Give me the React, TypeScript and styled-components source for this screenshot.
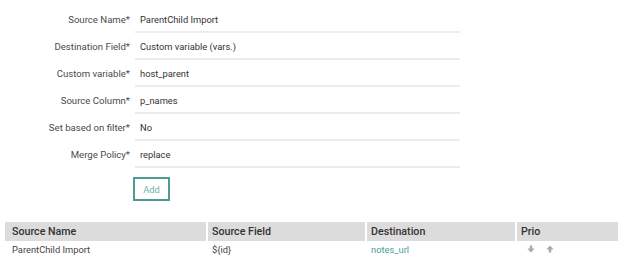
import React from "react";
import styled, { createGlobalStyle } from "styled-components";

const Global = createGlobalStyle`
  html, body { margin: 0; padding: 0; background: #fff; }
  body { font-family: Roboto, "Liberation Sans", Arial, sans-serif; }
`;

const Page = styled.div`
  width: 624px;
  height: 258px;
  overflow: hidden;
  display: flex;
  flex-direction: column;
`;

const Form = styled.div`
  display: grid;
  grid-template-columns: 130px 325px;
  column-gap: 5px;
  padding-top: 6px;
`;

const Label = styled.div`
  height: 27px;
  box-sizing: border-box;
  display: flex;
  align-items: flex-end;
  justify-content: flex-end;
  padding-bottom: 8px;
  font-size: 9.6px;
  line-height: 11px;
  color: #4a4a4a;
`;

const Value = styled.div`
  height: 27px;
  box-sizing: border-box;
  display: flex;
  align-items: flex-end;
  padding: 0 0 6px 5px;
  font-size: 9.33px;
  line-height: 11px;
  color: #333;
  border-bottom: 2px solid #ececec;
`;

const ButtonRow = styled.div`
  padding-left: 133px;
  margin-top: 9px;
`;

const AddButton = styled.button`
  width: 37px;
  height: 24px;
  box-sizing: border-box;
  border: 2px solid #4f9a93;
  background: #fff;
  color: #6fb0a9;
  font-family: Roboto, "Liberation Sans", Arial, sans-serif;
  font-size: 9.33px;
  padding: 0;
`;

const Table = styled.div`
  margin: 21px 0 0 5px;
  width: 613px;
`;

const Row = styled.div<{ $head?: boolean }>`
  display: grid;
  grid-template-columns: 201px 157px 148px 101px;
  column-gap: 2px;
  height: ${(p) => (p.$head ? 19 : 16)}px;
`;

const HeadCell = styled.div`
  background: #dcdcdc;
  display: flex;
  align-items: center;
  padding-left: 4px;
  font-size: 10.67px;
  font-weight: 500;
  color: #333;
  &:first-child { padding-left: 7px; }
`;

const Cell = styled.div<{ $link?: boolean }>`
  display: flex;
  align-items: center;
  padding-left: 4px;
  font-size: 9.33px;
  color: ${(p) => (p.$link ? "#4e9e96" : "#444")};
  &:first-child { padding-left: 7px; }
`;

const Arrows = styled.div`
  display: flex;
  gap: 11px;
  padding-left: 6px;
  align-items: center;
`;

const Arrow = ({ up }: { up?: boolean }) => (
  <svg width="8" height="8" viewBox="0 0 10 10">
    <g transform={up ? "" : "rotate(180 5 5)"} fill="#a8a8a8">
      <polygon points="5,0.5 9.5,5.5 6.5,5.5 6.5,9.5 3.5,9.5 3.5,5.5 0.5,5.5" />
    </g>
  </svg>
);

const fields: [string, string][] = [
  ["Source Name*", "ParentChild Import"],
  ["Destination Field*", "Custom variable (vars.)"],
  ["Custom variable*", "host_parent"],
  ["Source Column*", "p_names"],
  ["Set based on filter*", "No"],
  ["Merge Policy*", "replace"],
];

export default function App() {
  return (
    <Page>
      <Global />
      <Form>
        {fields.map(([l, v]) => (
          <React.Fragment key={l}>
            <Label>{l}</Label>
            <Value>{v}</Value>
          </React.Fragment>
        ))}
      </Form>
      <ButtonRow>
        <AddButton>Add</AddButton>
      </ButtonRow>
      <Table>
        <Row $head>
          <HeadCell>Source Name</HeadCell>
          <HeadCell>Source Field</HeadCell>
          <HeadCell>Destination</HeadCell>
          <HeadCell>Prio</HeadCell>
        </Row>
        <Row>
          <Cell>ParentChild Import</Cell>
          <Cell>{"${id}"}</Cell>
          <Cell $link>notes_url</Cell>
          <Cell>
            <Arrows>
              <Arrow />
              <Arrow up />
            </Arrows>
          </Cell>
        </Row>
      </Table>
    </Page>
  );
}
